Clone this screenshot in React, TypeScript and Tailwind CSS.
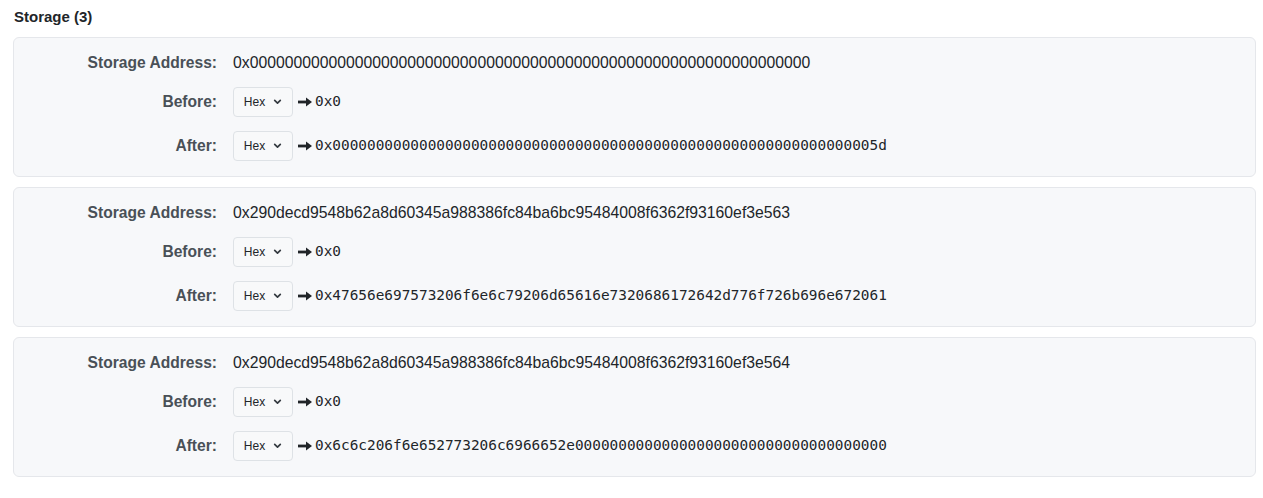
import React from 'react';

const slots = [
  {
    address: '0x0000000000000000000000000000000000000000000000000000000000000000',
    before: '0x0',
    after: '0x000000000000000000000000000000000000000000000000000000000000005d',
  },
  {
    address: '0x290decd9548b62a8d60345a988386fc84ba6bc95484008f6362f93160ef3e563',
    before: '0x0',
    after: '0x47656e697573206f6e6c79206d65616e7320686172642d776f726b696e672061',
  },
  {
    address: '0x290decd9548b62a8d60345a988386fc84ba6bc95484008f6362f93160ef3e564',
    before: '0x0',
    after: '0x6c6c206f6e652773206c6966652e000000000000000000000000000000000000',
  },
];

function HexSelect() {
  return (
    <div className="flex h-[30px] w-[60px] items-center justify-center gap-[8px] rounded-[4px] border border-[#dee2e6] bg-[#f8f9fa] text-[12px] text-[#212529]">
      <span>Hex</span>
      <svg className="h-[9px] w-[9px]" viewBox="0 0 16 16" fill="none" stroke="#343a40" strokeWidth={3} strokeLinecap="round" strokeLinejoin="round">
        <path d="M3 6l5 5 5-5" />
      </svg>
    </div>
  );
}

function Arrow() {
  return (
    <svg className="ml-[5px] h-[10px] w-[14px]" viewBox="0 0 14 10" fill="#212529">
      <rect x="0" y="3.6" width="9" height="2.8" />
      <path d="M8 0.5L14 5 8 9.5z" />
    </svg>
  );
}

function ValueRow({ label, value }: { label: string; value: string }) {
  return (
    <div className="flex items-center">
      <div className="w-[203px] shrink-0 text-right text-[15.6px] font-bold text-[#495057]">{label}</div>
      <div className="ml-[16px] flex items-center">
        <HexSelect />
        <Arrow />
        <span className="ml-[3px] font-['DejaVu_Sans_Mono',monospace] text-[14.4px] text-[#212529]">{value}</span>
      </div>
    </div>
  );
}

export default function App() {
  return (
    <div className="bg-white pl-[13px] pr-[7px] pt-[6px] font-['Liberation_Sans',Arial,sans-serif] text-[#212529]">
      <h3 className="mb-[8px] pl-[1px] text-[15px] font-bold text-[#212529]">Storage ({slots.length})</h3>
      <div className="flex flex-col gap-[10px]">
        {slots.map((s, i) => (
          <div key={i} className="flex h-[140px] flex-col rounded-[6px] border border-[#e5e7eb] bg-[#f7f8fa] pt-[13px]">
            <div className="flex h-[24px] items-center">
              <div className="w-[203px] shrink-0 text-right text-[15.6px] font-bold text-[#495057]">Storage Address:</div>
              <div className="ml-[16px] text-[15.75px] text-[#212529]">{s.address}</div>
            </div>
            <div className="mt-[12px]">
              <ValueRow label="Before:" value={s.before} />
            </div>
            <div className="mt-[14px]">
              <ValueRow label="After:" value={s.after} />
            </div>
          </div>
        ))}
      </div>
    </div>
  );
}
